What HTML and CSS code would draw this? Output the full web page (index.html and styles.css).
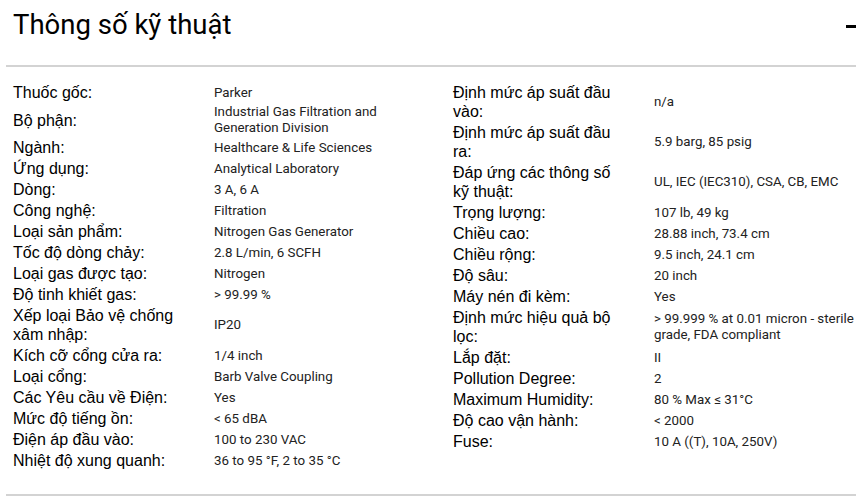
FILE: index.html
```html
<!DOCTYPE html>
<html lang="vi">
<head>
<meta charset="utf-8">
<title>Thông số kỹ thuật</title>
<link rel="stylesheet" href="styles.css">
</head>
<body>
<section class="specs">
  <header class="specs-head">
    <h2 class="specs-title">Thông số kỹ thuật</h2>
    <span class="toggle" aria-label="Thu gọn"></span>
  </header>
  <div class="specs-body">
    <div class="col">
      <div class="row"><span class="lbl">Thuốc gốc:</span><span class="val">Parker</span></div>
      <div class="row"><span class="lbl">Bộ phận:</span><span class="val">Industrial Gas Filtration and Generation Division</span></div>
      <div class="row"><span class="lbl">Ngành:</span><span class="val">Healthcare &amp; Life Sciences</span></div>
      <div class="row"><span class="lbl">Ứng dụng:</span><span class="val">Analytical Laboratory</span></div>
      <div class="row"><span class="lbl">Dòng:</span><span class="val">3 A, 6 A</span></div>
      <div class="row"><span class="lbl">Công nghệ:</span><span class="val">Filtration</span></div>
      <div class="row"><span class="lbl">Loại sản phẩm:</span><span class="val">Nitrogen Gas Generator</span></div>
      <div class="row"><span class="lbl">Tốc độ dòng chảy:</span><span class="val">2.8 L/min, 6 SCFH</span></div>
      <div class="row"><span class="lbl">Loại gas được tạo:</span><span class="val">Nitrogen</span></div>
      <div class="row"><span class="lbl">Độ tinh khiết gas:</span><span class="val">&gt; 99.99 %</span></div>
      <div class="row"><span class="lbl">Xếp loại Bảo vệ chống xâm nhập:</span><span class="val">IP20</span></div>
      <div class="row"><span class="lbl">Kích cỡ cổng cửa ra:</span><span class="val">1/4 inch</span></div>
      <div class="row"><span class="lbl">Loại cổng:</span><span class="val">Barb Valve Coupling</span></div>
      <div class="row"><span class="lbl">Các Yêu cầu về Điện:</span><span class="val">Yes</span></div>
      <div class="row"><span class="lbl">Mức độ tiếng ồn:</span><span class="val">&lt; 65 dBA</span></div>
      <div class="row"><span class="lbl">Điện áp đầu vào:</span><span class="val">100 to 230 VAC</span></div>
      <div class="row"><span class="lbl">Nhiệt độ xung quanh:</span><span class="val">36 to 95 °F, 2 to 35 °C</span></div>
    </div>
    <div class="col">
      <div class="row"><span class="lbl">Định mức áp suất đầu vào:</span><span class="val">n/a</span></div>
      <div class="row"><span class="lbl">Định mức áp suất đầu ra:</span><span class="val">5.9 barg, 85 psig</span></div>
      <div class="row"><span class="lbl">Đáp ứng các thông số kỹ thuật:</span><span class="val">UL, IEC (IEC310), CSA, CB, EMC</span></div>
      <div class="row"><span class="lbl">Trọng lượng:</span><span class="val">107 lb, 49 kg</span></div>
      <div class="row"><span class="lbl">Chiều cao:</span><span class="val">28.88 inch, 73.4 cm</span></div>
      <div class="row"><span class="lbl">Chiều rộng:</span><span class="val">9.5 inch, 24.1 cm</span></div>
      <div class="row"><span class="lbl">Độ sâu:</span><span class="val">20 inch</span></div>
      <div class="row"><span class="lbl">Máy nén đi kèm:</span><span class="val">Yes</span></div>
      <div class="row"><span class="lbl">Định mức hiệu quả bộ lọc:</span><span class="val">&gt; 99.999 % at 0.01 micron - sterile grade, FDA compliant</span></div>
      <div class="row"><span class="lbl">Lắp đặt:</span><span class="val">II</span></div>
      <div class="row"><span class="lbl">Pollution Degree:</span><span class="val">2</span></div>
      <div class="row"><span class="lbl">Maximum Humidity:</span><span class="val">80 % Max ≤ 31°C</span></div>
      <div class="row"><span class="lbl">Độ cao vận hành:</span><span class="val">&lt; 2000</span></div>
      <div class="row"><span class="lbl">Fuse:</span><span class="val">10 A ((T), 10A, 250V)</span></div>
    </div>
  </div>
</section>
</body>
</html>
```

FILE: styles.css
```css
html, body {
  margin: 0;
  padding: 0;
  overflow: hidden;
  background: #fff;
}

.specs {
  margin-left: 6px;
  border-bottom: 2px solid #d3d3d3;
  padding-bottom: 23px;
}

.specs-head {
  display: flex;
  justify-content: space-between;
  align-items: flex-start;
  padding: 8px 0 24px 7px;
  border-bottom: 2px solid #d3d3d3;
}

.specs-title {
  margin: 0;
  font-family: Roboto, "Noto Sans", sans-serif;
  font-size: 27.5px;
  font-weight: 400;
  line-height: 33px;
  color: #000;
}

.toggle {
  display: block;
  width: 10px;
  height: 3px;
  margin-top: 17px;
  background: #000;
}

.specs-body {
  display: flex;
  gap: 24px;
  padding: 15px 0 0 7px;
}

.col {
  flex: 0 0 416px;
  display: flex;
  flex-direction: column;
}

.row {
  display: grid;
  grid-template-columns: 201px 215px;
  align-items: center;
  padding: 1px 0;
}

.lbl {
  padding-right: 35px;
  font-family: "Liberation Sans", Arial, sans-serif;
  font-size: 16px;
  line-height: 19px;
  color: #000;
}

.val {
  font-family: Roboto, "Noto Sans", sans-serif;
  font-size: 13.33px;
  line-height: 16px;
  color: #222;
}
```
